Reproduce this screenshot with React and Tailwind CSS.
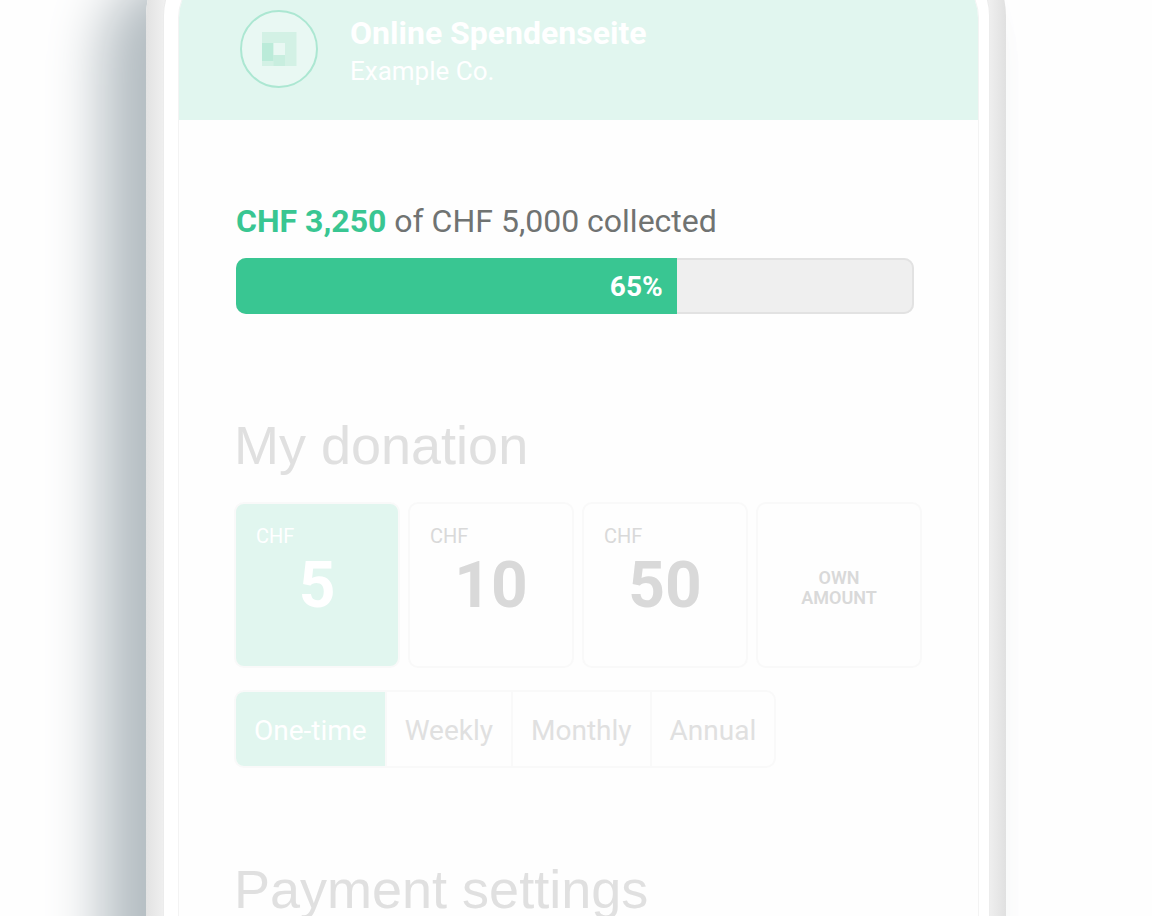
import { useState } from 'react'

const amounts = [5, 10, 50]
const intervals = ['One-time', 'Weekly', 'Monthly', 'Annual']

const collected = 3250
const goal = 5000

function Logo() {
  return (
    <svg className="h-[78px] w-[78px] shrink-0" viewBox="0 0 78 78" aria-hidden="true">
      <circle cx="39" cy="39" r="38" fill="#e9f8f3" stroke="#ace7d2" strokeWidth="2" />
      <path d="M22 22h34.500v34H22z" fill="#d3f1e5" />
      <path d="M22 33h11.500v18H22z" fill="#bbebd9" />
      <path d="M33.500 45H45v11H33.500z" fill="#c8eedf" />
      <path d="M33.500 33H45v12H33.500z" fill="#e9f8f3" />
    </svg>
  )
}

function Progress() {
  const percent = Math.round((collected / goal) * 100)

  return (
    <section className="pr-2 pl-0.5">
      <p className="text-[32px] leading-10 text-[#707372]">
        <strong className="font-bold text-[#39c692]">CHF {collected.toLocaleString('en-US')}</strong>
        {' of CHF '}
        {goal.toLocaleString('en-US')} collected
      </p>
      <div
        className="mt-[17px] h-14 overflow-hidden rounded-[10px] bg-[#efefef] inset-ring-2 inset-ring-[#e2e2e2]"
        role="progressbar"
        aria-label="Donations collected"
        aria-valuenow={percent}
        aria-valuemin={0}
        aria-valuemax={100}
      >
        <div
          className="flex h-full items-center justify-end bg-[#39c692] pt-0.5 pr-3.5 text-[28px] font-bold text-white"
          style={{ width: `${percent}%` }}
        >
          {percent}%
        </div>
      </div>
    </section>
  )
}

function App() {
  const [amount, setAmount] = useState(5)
  const [interval, setInterval] = useState('One-time')

  return (
    <main className="flex h-screen items-start justify-center overflow-hidden bg-[#fefefe] font-[Roboto,sans-serif]">
      <div className="-mt-16 w-full max-w-[860px] rounded-t-[80px] bg-[linear-gradient(to_right,#e2e2e2,#f0f0f0_18px,#f0f0f0_calc(100%-18px),#e0e0e0)] pt-[18px] pr-[17px] pl-[18px] shadow-[-44px_36px_54px_#b4bdc2,8px_40px_12px_#fcfcfc]">
        <div className="rounded-t-[62px] bg-white pt-3.5 pr-2.5 pl-3.5 ring-1 ring-[#ececec]">
          <div className="min-h-screen overflow-hidden rounded-t-[50px] border-x border-[#f3f3f3] bg-[#fefefe]">
            <header className="flex items-start gap-8 bg-[#e1f6ef] px-[61px] pt-[42px] pb-[30px] text-white">
              <Logo />
              <div className="pt-1 leading-[38px]">
                <h1 className="text-[32px] font-bold">Online Spendenseite</h1>
                <p className="text-[26px]">Example Co.</p>
              </div>
            </header>

            <div className="pt-[81px] pr-14 pb-16 pl-[55px]">
              <Progress />

              <section className="mt-[99px]">
                <h2 className="font-['Liberation_Sans',sans-serif] text-[54px] leading-16 text-[#e0e0e0]">
                  My donation
                </h2>

                <div className="mt-[25px] grid grid-cols-4 gap-2">
                  {amounts.map((value) => (
                    <button
                      key={value}
                      type="button"
                      aria-pressed={amount === value}
                      onClick={() => setAmount(value)}
                      className={`flex h-[166px] flex-col rounded-[10px] border-2 border-[#f9f9f9] px-5 pt-5 ${
                        amount === value ? 'bg-[#e1f6ef] text-white' : 'text-[#d9d9d9]'
                      }`}
                    >
                      <span className="self-start text-xl leading-6">CHF</span>
                      <span className="self-center text-[64px] leading-[76px] font-bold">{value}</span>
                    </button>
                  ))}
                  <button
                    type="button"
                    aria-pressed={amount === 'own'}
                    onClick={() => setAmount('own')}
                    className={`flex h-[166px] items-center justify-center rounded-[10px] border-2 border-[#f9f9f9] px-10 pt-1.5 text-lg leading-5 font-semibold ${
                      amount === 'own' ? 'bg-[#e1f6ef] text-white' : 'text-[#d9d9d9]'
                    }`}
                  >
                    OWN AMOUNT
                  </button>
                </div>

                <div className="mt-[22px] inline-flex h-[78px] divide-x-2 divide-[#f9f9f9] overflow-hidden rounded-[10px] border-2 border-[#f9f9f9]">
                  {intervals.map((name) => (
                    <button
                      key={name}
                      type="button"
                      aria-pressed={interval === name}
                      onClick={() => setInterval(name)}
                      className={`px-[18px] pt-1 text-[28px] ${
                        interval === name ? 'bg-[#e1f6ef] text-white' : 'text-[#e0e0e0]'
                      }`}
                    >
                      {name}
                    </button>
                  ))}
                </div>
              </section>

              <section className="mt-[89px]">
                <h2 className="font-['Liberation_Sans',sans-serif] text-[54px] leading-16 text-[#e0e0e0]">
                  Payment settings
                </h2>
              </section>
            </div>
          </div>
        </div>
      </div>
    </main>
  )
}

export default App
